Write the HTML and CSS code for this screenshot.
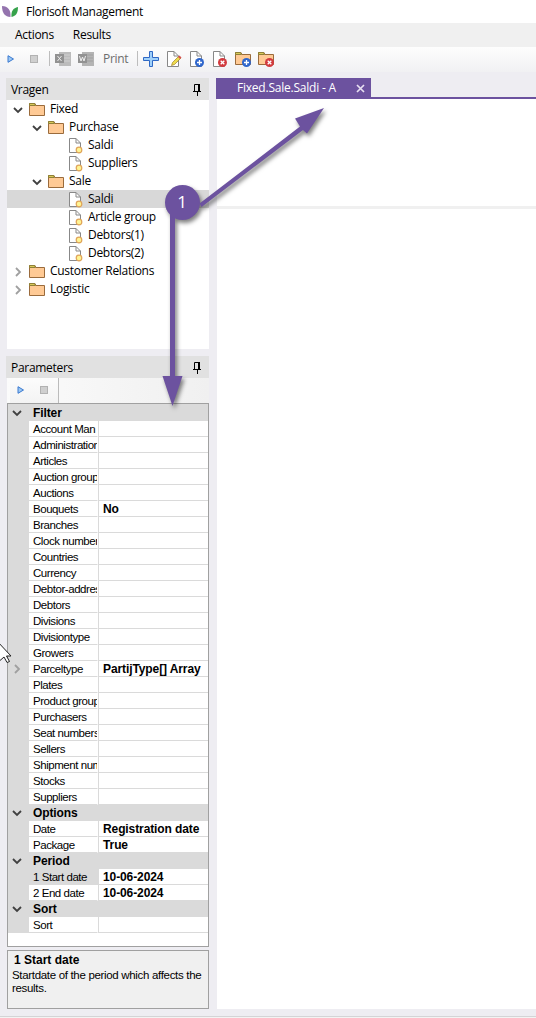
FILE: index.html
```html
<!DOCTYPE html>
<html lang="en">
<head>
<meta charset="utf-8">
<title>Florisoft Management</title>
<link rel="stylesheet" href="styles.css">
</head>
<body>
<svg class="defs" aria-hidden="true">
  <symbol id="folder" viewBox="0 0 16 16"><path d="M.5 2V13.500H15.500V3.500H7L6 1.500H.5Z" fill="#ffca95" stroke="#9a6b3c"/><path d="M.5 1.500H5.500L6.500 3.500H.5Z" fill="#d8c95a" stroke="#8f8137"/></symbol>
  <symbol id="page" viewBox="0 0 16 16"><path d="M1.500.5H8L12.500 5V15.500H1.500Z" fill="#fff" stroke="#888"/><path d="M8 .5V5H12.500" fill="none" stroke="#888"/></symbol>
  <symbol id="doc" viewBox="0 0 16 16"><path d="M1.500.5H8L12.500 5V14.500H1.500Z" fill="#fff" stroke="#888"/><path d="M8 .5V5H12.500" fill="none" stroke="#888"/><circle cx="11" cy="12" r="2.800" fill="#fff493" stroke="#e0a458" stroke-width="1.200"/></symbol>
  <symbol id="plus" viewBox="0 0 9 9"><circle cx="4.500" cy="4.500" r="4.500" fill="#2f66cc"/><path d="M4.500 2V7M2 4.500H7" stroke="#fff" stroke-width="1.300"/></symbol>
  <symbol id="cross" viewBox="0 0 9 9"><circle cx="4.500" cy="4.500" r="4.500" fill="#d23a3e"/><path d="M2.700 2.700L6.300 6.300M6.300 2.700L2.700 6.300" stroke="#fff" stroke-width="1.300"/></symbol>
  <symbol id="down" viewBox="0 0 10 10"><path d="M1 3L5 7L9 3" fill="none" stroke="#404040" stroke-width="1.800"/></symbol>
  <symbol id="right" viewBox="0 0 10 10"><path d="M3 1L7 5L3 9" fill="none" stroke="#a0a0a0" stroke-width="1.800"/></symbol>
  <symbol id="pin" viewBox="0 0 8 12"><path d="M1.500 7V.5H6.500V7M0 7.500H8M4.500 7V12" fill="none" stroke="#000"/><path d="M5 0H7V7H5Z"/></symbol>
  <symbol id="play" viewBox="0 0 8 8"><path d="M1 .7L6.500 4L1 7.300Z" fill="#9cc8f3" stroke="#3a79d0"/></symbol>
</svg>

<header class="titlebar">
  <svg class="logo" viewBox="0 0 18 14"><path d="M1 1C7 1 10 5 9.500 12C4 12 1 8 1 1Z" fill="#9474ae"/><path d="M17 2C12 3 10 6 10.500 12C15 11 17 8 17 2Z" fill="#36a24b"/></svg>
  <span class="app-name">Florisoft Management</span>
</header>
<nav class="menubar"><span class="m-actions">Actions</span><span class="m-results">Results</span></nav>
<div class="toolbar">
  <svg class="play"><use href="#play"/></svg><i class="stop"></i><i class="sep"></i>
  <svg class="office" viewBox="0 0 16 16"><path d="M4 1H16V15H4Z" fill="#bcbcbc"/><path d="M9 4H15M9 7H15M9 10H15" stroke="#d0d0d0"/><path d="M0 3H9V12H0Z" fill="#929292"/><path d="M2.500 5L6.500 10M6.500 5L2.500 10" stroke="#eee"/></svg>
  <svg class="office word" viewBox="0 0 16 16"><path d="M4 1H16V15H4Z" fill="#b4b4b4"/><path d="M9 4H15M9 7H15M9 10H15" stroke="#a0a0a0"/><path d="M0 3H9V12H0Z" fill="#929292"/><path d="M1.500 5L3 10L4.500 6L6 10L7.500 5" fill="none" stroke="#eee"/></svg>
  <span class="print">Print</span><i class="sep sep-b"></i>
  <svg class="ico add" viewBox="0 0 16 16"><path d="M6.500.5H9.500V6.500H15.500V9.500H9.500V15.500H6.500V9.500H.5V6.500H6.500Z" fill="#9fd0fa" stroke="#2f68c4"/></svg>
  <svg class="ico" viewBox="0 0 16 16"><use href="#page" width="16" height="16"/><path d="M5.500 14.500L6.500 11.500L13 5L15 7L8.500 13.500Z" fill="#eedc4c" stroke="#a08028" stroke-width=".7"/><path d="M12 6L13.500 4.500L15.500 6.500L14 8Z" fill="#d65050"/></svg>
  <svg class="ico" viewBox="0 0 16 16"><use href="#page" width="16" height="16"/><use href="#plus" x="6" y="7" width="9" height="9"/></svg>
  <svg class="ico" viewBox="0 0 16 16"><use href="#page" width="16" height="16"/><use href="#cross" x="6" y="7" width="9" height="9"/></svg>
  <svg class="ico" viewBox="0 0 16 16"><use href="#folder" width="16" height="16"/><use href="#plus" x="7" y="7" width="9" height="9"/></svg>
  <svg class="ico" viewBox="0 0 16 16"><use href="#folder" width="16" height="16"/><use href="#cross" x="7" y="7" width="9" height="9"/></svg>
</div>

<div class="workspace">
  <aside class="sidebar">
    <section class="tree-panel">
      <h2 class="panel-head"><span class="t-vragen">Vragen</span><svg class="pin"><use href="#pin"/></svg></h2>
      <div class="tree">
        <div class="node"><svg class="arr"><use href="#down"/></svg><svg class="ico"><use href="#folder"/></svg><span>Fixed</span></div>
        <div class="node l1"><svg class="arr"><use href="#down"/></svg><svg class="ico"><use href="#folder"/></svg><span>Purchase</span></div>
        <div class="node l2"><svg class="ico"><use href="#doc"/></svg><span>Saldi</span></div>
        <div class="node l2"><svg class="ico"><use href="#doc"/></svg><span>Suppliers</span></div>
        <div class="node l1"><svg class="arr"><use href="#down"/></svg><svg class="ico"><use href="#folder"/></svg><span>Sale</span></div>
        <div class="node l2 selected"><svg class="ico"><use href="#doc"/></svg><span>Saldi</span></div>
        <div class="node l2"><svg class="ico"><use href="#doc"/></svg><span>Article group</span></div>
        <div class="node l2"><svg class="ico"><use href="#doc"/></svg><span>Debtors(1)</span></div>
        <div class="node l2"><svg class="ico"><use href="#doc"/></svg><span>Debtors(2)</span></div>
        <div class="node"><svg class="arr"><use href="#right"/></svg><svg class="ico"><use href="#folder"/></svg><span>Customer Relations</span></div>
        <div class="node"><svg class="arr"><use href="#right"/></svg><svg class="ico"><use href="#folder"/></svg><span>Logistic</span></div>
      </div>
    </section>
    <section class="param-panel">
      <h2 class="panel-head params"><span>Parameters</span><svg class="pin"><use href="#pin"/></svg></h2>
      <div class="mini-bar"><div class="mini-tools"><svg class="play"><use href="#play"/></svg><i class="stop"></i></div></div>
      <div class="grid">
        <div class="group first"><svg class="arr"><use href="#down"/></svg><b>Filter</b></div>
        <div class="row"><i></i><span>Account Man</span><b></b></div>
        <div class="row"><i></i><span>Administration</span><b></b></div>
        <div class="row"><i></i><span>Articles</span><b></b></div>
        <div class="row"><i></i><span>Auction group</span><b></b></div>
        <div class="row"><i></i><span>Auctions</span><b></b></div>
        <div class="row"><i></i><span>Bouquets</span><b>No</b></div>
        <div class="row"><i></i><span>Branches</span><b></b></div>
        <div class="row"><i></i><span>Clock number</span><b></b></div>
        <div class="row"><i></i><span>Countries</span><b></b></div>
        <div class="row"><i></i><span>Currency</span><b></b></div>
        <div class="row"><i></i><span>Debtor-addres</span><b></b></div>
        <div class="row"><i></i><span>Debtors</span><b></b></div>
        <div class="row"><i></i><span>Divisions</span><b></b></div>
        <div class="row"><i></i><span>Divisiontype</span><b></b></div>
        <div class="row"><i></i><span>Growers</span><b></b></div>
        <div class="row"><i><svg class="arr"><use href="#right"/></svg></i><span>Parceltype</span><b>PartijType[] Array</b></div>
        <div class="row"><i></i><span>Plates</span><b></b></div>
        <div class="row"><i></i><span>Product group</span><b></b></div>
        <div class="row"><i></i><span>Purchasers</span><b></b></div>
        <div class="row"><i></i><span>Seat numbers</span><b></b></div>
        <div class="row"><i></i><span>Sellers</span><b></b></div>
        <div class="row"><i></i><span>Shipment num</span><b></b></div>
        <div class="row"><i></i><span>Stocks</span><b></b></div>
        <div class="row"><i></i><span>Suppliers</span><b></b></div>
        <div class="group"><svg class="arr"><use href="#down"/></svg><b>Options</b></div>
        <div class="row"><i></i><span>Date</span><b>Registration date</b></div>
        <div class="row"><i></i><span>Package</span><b>True</b></div>
        <div class="group"><svg class="arr"><use href="#down"/></svg><b>Period</b></div>
        <div class="row current"><i></i><span>1 Start date</span><b>10-06-2024</b></div>
        <div class="row"><i></i><span>2 End date</span><b>10-06-2024</b></div>
        <div class="group"><svg class="arr"><use href="#down"/></svg><b>Sort</b></div>
        <div class="row"><i></i><span>Sort</span><b></b></div>
      </div>
      <div class="help"><b>1 Start date</b><p>Startdate of the period which affects the<br>results.</p></div>
    </section>
  </aside>
  <main class="document">
    <div class="tabs"><div class="tab"><span>Fixed.Sale.Saldi - A</span><svg class="close" viewBox="0 0 9 9"><path d="M1 1L8 8M8 1L1 8" stroke="#e8e0f2" stroke-width="1.700"/></svg></div></div>
    <div class="upper"></div>
    <div class="lower"></div>
  </main>
</div>
<footer class="statusbar"></footer>

<svg class="callout" viewBox="0 0 536 1018">
  <g class="shadowed">
    <path d="M170 210H175V376H182.500L172.500 406L162.500 376H170Z"/>
    <path d="M199.500 203.500L300 126.500L295 118.500L324 108L307 133.500L303 130L201.500 207Z"/>
    <circle cx="182.500" cy="202.500" r="17.500"/>
  </g>
  <text x="182" y="208" text-anchor="middle">1</text>
</svg>
<svg class="pointer" viewBox="0 0 13 20"><path d="M-3 -2L11 13H6.500L9.500 18.500L7 19.500L4 14L0 17.500" fill="#fff" stroke="#222"/></svg>
</body>
</html>
```

FILE: styles.css
```css
* { box-sizing: border-box; }
body { margin: 0; width: 536px; height: 1018px; overflow: hidden; position: relative; display: flex; flex-direction: column; background: #eeedf2; color: #000; font: 12px/18px "Open Sans", sans-serif; letter-spacing: -.3px; }
svg { display: block; flex: none; }
span, b { white-space: nowrap; }
.defs { position: absolute; width: 0; height: 0; }
.titlebar { height: 23px; background: #fff; display: flex; align-items: center; padding-left: 1px; gap: 7px; }
.logo { width: 18px; height: 14px; }
.menubar { height: 24px; background: #f0f0f0; display: flex; align-items: center; gap: 19px; padding-left: 15px; }
.toolbar { height: 25px; background: linear-gradient(#fdfdfd, #f1f1f3); display: flex; align-items: center; padding: 0 0 2px 7px; }
.play { width: 8px; height: 8px; }
.stop { width: 8px; height: 8px; flex: none; background: #cfcfcf; border: 1px solid #b2b2b2; margin-left: 15px; }
.sep { width: 1px; height: 15px; background: #bdbdbd; margin: 0 5px 0 11px; }
.office { width: 16px; height: 16px; }
.word { margin-left: 7px; }
.print { color: #6d6d6d; margin-left: 9px; width: 26px; }
.sep-b { margin: 0 5px 0 8px; }
.ico { width: 16px; height: 16px; }
.toolbar .ico + .ico { margin-left: 7px; }
.workspace { display: flex; margin-top: 6px; padding-left: 6px; height: 931px; }
.sidebar { width: 203px; display: flex; flex-direction: column; gap: 7px; }
.panel-head { margin: 0; height: 22px; background: #e1e1e1; font-size: 12px; font-weight: 400; display: flex; align-items: center; justify-content: space-between; padding: 1px 8px 0 5px; }
.pin { width: 8px; height: 12px; }
.tree { margin-left: 1px; height: 249px; background: #fff; }
.node { height: 18px; display: flex; align-items: center; padding-left: 6px; }
.node .arr { margin-top: 2px; }
.node .ico { margin: 2px 5px 0 6px; }
.arr { width: 10px; height: 10px; }
.l1 { padding-left: 25px; }
.node.l2 { padding-left: 55px; }
.node.l2 .ico { margin-right: 4px; }
.selected { background: #d8d8d8; }
.mini-bar { height: 25px; margin-left: 1px; background: linear-gradient(90deg, #fbfbfb, #f0f0f0); padding-left: 3px; }
.mini-tools { height: 25px; width: 49px; background: linear-gradient(#fcfcfc, #f3f3f3); border-right: 1px solid #bbb; display: flex; align-items: center; padding: 0 0 2px 7px; }
.grid { margin-left: 1px; height: 544px; border: 1px solid #a0a0a0; background: #fff; font: 11.5px/17px "Liberation Sans", Arial, sans-serif; letter-spacing: -.45px; }
.group { height: 16px; background: #dadada; display: flex; align-items: center; padding-left: 4px; gap: 11px; font-size: 12px; letter-spacing: -.1px; }
.first { height: 17px; padding-top: 1px; }
.row { height: 16px; display: grid; grid-template-columns: 21px 69px 1fr; grid-template-rows: 16px; }
.row i { background: #dadada; padding: 3px 0 0 4px; }
.row span { padding-left: 4px; border-bottom: 1px solid #dadada; border-right: 1px solid #fff; overflow: hidden; }
.row b { border-left: 1px solid #dadada; border-bottom: 1px solid #dadada; padding-left: 4px; font-size: 12px; letter-spacing: -.1px; }
.current span { background: #dadada; border-right-color: #dadada; }
.help { margin: 3px 0 0 1px; height: 59px; border: 1px solid #a0a0a0; background: #f0f0f0; font: 11.5px/13px "Liberation Sans", Arial, sans-serif; letter-spacing: -.32px; padding: 2px 4px; }
.help b { display: block; padding-left: 2px; font-size: 12px; line-height: 15px; letter-spacing: 0; }
.help p { margin: 1px 0 0; white-space: nowrap; }
.param-panel { display: flex; flex-direction: column; }
.document { flex: 1; margin-left: 7px; display: flex; flex-direction: column; }
.tabs { height: 21px; border-bottom: 2px solid #6c529f; }
.tab { width: 155px; height: 20px; background: #6c529f; color: #fff; display: flex; align-items: center; justify-content: space-between; padding: 0 6px 0 21px; letter-spacing: -.22px; }
.close { width: 9px; height: 9px; }
.upper { height: 107px; margin-left: 1px; background: #fff; }
.lower { flex: 1; margin-left: 1px; background: #fff; border-top: 3px solid #f0f0f0; }
.statusbar { margin-top: 7px; height: 2px; background: #f3f3f3; border-top: 1px solid #d4d4d6; }
.callout { position: absolute; inset: 0; width: 536px; height: 1018px; }
.shadowed { fill: #6c529f; filter: drop-shadow(2px 3px 2px rgba(0, 0, 0, .5)); }
.callout text { fill: #fff; font: 17px "Open Sans", sans-serif; }
.pointer { position: absolute; left: 0; top: 643px; width: 13px; height: 20px; }
```
